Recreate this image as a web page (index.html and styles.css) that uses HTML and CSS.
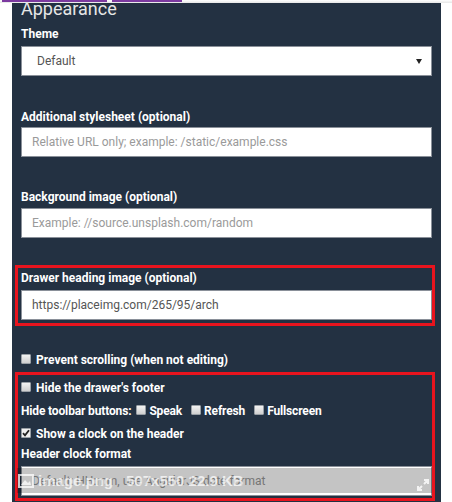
FILE: index.html
```html
<!DOCTYPE html>
<html>
<head>
<meta charset="utf-8">
<link rel="stylesheet" href="styles.css">
</head>
<body>
<div class="topbar">
  <span class="tab tab-a"></span>
  <span class="tab tab-b"></span>
</div>
<div class="panel">
  <h2 class="heading">Appearance</h2>

  <div class="group g-theme">
    <label class="label">Theme</label>
    <div class="select">
      <span class="select-value">Default</span>
      <svg class="caret" width="6" height="5" viewBox="0 0 6 5"><path d="M0 0H6L3 5Z" fill="#222"/></svg>
    </div>
  </div>

  <div class="group g-sheet">
    <label class="label">Additional stylesheet (optional)</label>
    <div class="input placeholder">Relative URL only; example: /static/example.css</div>
  </div>

  <div class="group g-bg">
    <label class="label">Background image (optional)</label>
    <div class="input placeholder">Example: //source.unsplash.com/random</div>
  </div>

  <div class="redbox box-drawer">
    <label class="label">Drawer heading image (optional)</label>
    <div class="input value">https://placeimg.com/265/95/arch</div>
  </div>

  <div class="check-row row-prevent"><span class="cb"></span><span>Prevent scrolling (when not editing)</span></div>

  <div class="redbox box-bottom">
    <div class="check-row"><span class="cb"></span><span>Hide the drawer's footer</span></div>
    <div class="check-row toolbar-row"><span class="plain">Hide toolbar buttons:</span><span class="cb"></span><span class="opt">Speak</span><span class="cb"></span><span class="opt">Refresh</span><span class="cb"></span><span>Fullscreen</span></div>
    <div class="check-row"><span class="cb checked"><svg width="8" height="8" viewBox="0 0 8 8"><path d="M1 4.2L3 6.4L7 1.2" stroke="#222" stroke-width="1.8" fill="none"/></svg></span><span>Show a clock on the header</span></div>
    <label class="label l-clock">Header clock format</label>
    <div class="input placeholder">Default: HH:mm, use AngularJS date format</div>
  </div>
</div>

<div class="meta">
  <svg class="meta-icon" width="16" height="14" viewBox="0 0 16 14"><rect x="1" y="1" width="14" height="12" fill="none" stroke="rgba(255,255,255,0.75)" stroke-width="2"/><path d="M3 11L7 6L10 9L12 7L13 11Z" fill="rgba(255,255,255,0.75)"/></svg>
  <span class="meta-name">image.png</span>
  <span class="meta-info">507x550 22.9 KB</span>
  <svg class="meta-expand" width="12" height="12" viewBox="0 0 12 12"><path d="M7 1H11V5M11 1L7 5M5 11H1V7M1 11L5 7" stroke="rgba(255,255,255,0.8)" stroke-width="2" fill="none"/></svg>
</div>
</body>
</html>
```
FILE: styles.css
```css
html, body {
  margin: 0;
  padding: 0;
  background: #ffffff;
  font-family: Roboto, "Liberation Sans", sans-serif;
  overflow: hidden;
}
.topbar {
  height: 3px;
  display: flex;
  background: linear-gradient(#fff, #e6e6e6);
}
.tab {
  height: 2px;
  background: #7c3aa0;
}
.tab-a { margin-left: 2px; width: 105px; }
.tab-b { margin-left: 5px; width: 70px; }

.panel {
  margin-left: 12px;
  width: 411px;
  padding: 0 9px 1px 9px;
  background: #233142;
  color: #ffffff;
}
.heading {
  margin: 0;
  padding-top: 0;
  font-size: 18px;
  line-height: 14px;
  font-weight: 400;
  color: #e6e6e6;
  height: 10px;
  position: relative;
  top: -1px;
}
.label {
  display: block;
  font-size: 12px;
  font-weight: 700;
  line-height: 15px;
  color: #ffffff;
}
.group { display: flex; flex-direction: column; }
.g-theme { margin-top: 14px; gap: 4px; }
.g-sheet { margin-top: 34px; gap: 2px; }
.g-bg { margin-top: 33px; gap: 3px; }

.select, .input {
  box-sizing: border-box;
  height: 30px;
  width: 411px;
  background: #ffffff;
  border: 1px solid #8a9099;
  font-size: 12px;
  display: flex;
  align-items: center;
}
.select {
  padding: 0 9px 0 15px;
  justify-content: space-between;
  color: #555;
}
.caret { margin-top: 1px; }
.input { padding-left: 10px; }
.placeholder { color: #9a9a9a; }
.value { color: #555; }

.redbox {
  border: 3px solid #e8141e;
  margin: 0 -3px 0 -6px;
  padding: 3px 0 3px 3px;
}
.box-drawer { margin-top: 27px; }
.box-drawer .label { margin-bottom: 4px; }

.check-row {
  display: flex;
  align-items: baseline;
  font-size: 12px;
  font-weight: 700;
  line-height: 20px;
  margin-bottom: 3px;
}
.row-prevent { margin-top: 24px; margin-bottom: 2px; }
.check-row:last-of-type { margin-bottom: 0; }
.cb {
  flex: none;
  box-sizing: border-box;
  width: 10px;
  height: 10px;
  margin-right: 5px;
  background: linear-gradient(#f2f2f2, #cfcfcf);
  border: 1px solid #9aa0a6;
  border-radius: 1px;
  align-self: center;
  position: relative;
  top: -1px;
  display: flex;
  align-items: center;
  justify-content: center;
}
.cb.checked { background: #f0f0f0; }
.toolbar-row { letter-spacing: -0.15px; }
.plain { margin-right: 5px; }
.opt { margin-right: 9px; }
.toolbar-row .cb { margin-right: 3px; }
.l-clock { margin-top: 3px; margin-bottom: 4px; }
.box-bottom { padding-bottom: 2px; }

.meta {
  position: absolute;
  left: 17px;
  top: 468px;
  width: 415px;
  height: 25px;
  background: rgba(0, 0, 0, 0.23);
  display: flex;
  align-items: center;
  color: rgba(255, 255, 255, 0.72);
  font-family: "Liberation Sans", Arial, sans-serif;
  font-weight: 700;
  font-size: 15px;
}
.meta-icon { margin-left: 1px; margin-right: 4px; }
.meta-name { margin-right: 13px; }
.meta-expand { margin-left: auto; margin-right: 3px; margin-top: 8px; }
```
